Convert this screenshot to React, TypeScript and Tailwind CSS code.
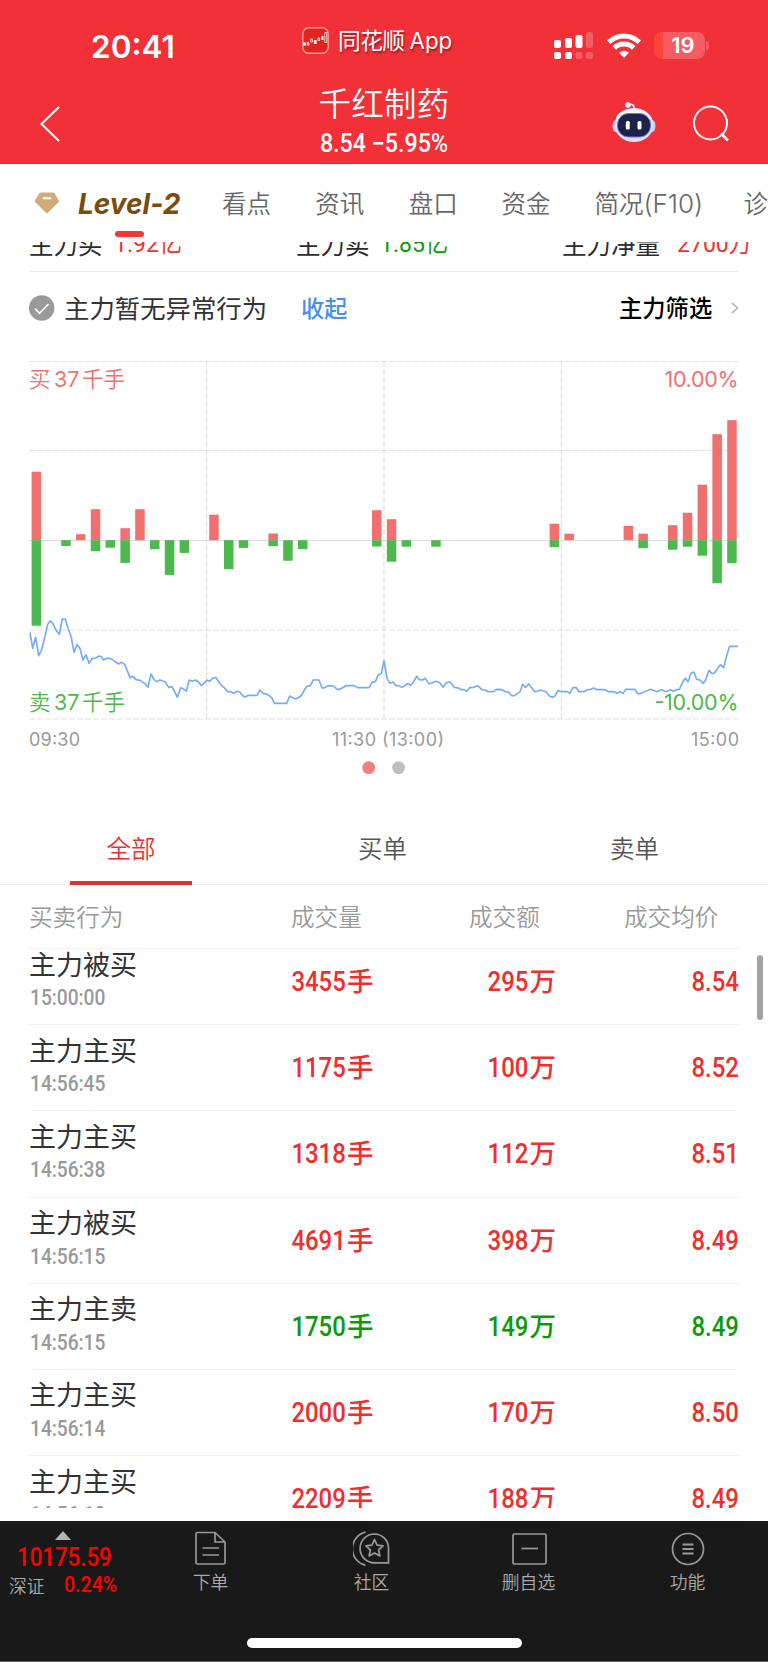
import React from "react";

const RED_BARS: [number, number][] = [
  [0, 68.5], [3, 6], [4, 31], [6, 12], [7, 31], [12, 25.5], [16, 6.7], [23, 30], [24, 21],
  [35, 16.5], [36, 6.5], [40, 14.3], [41, 6.5], [43, 15], [44, 27.5], [45, 55.5], [46, 106], [47, 120],
];
const GREEN_BARS: [number, number][] = [
  [0, 85.5], [2, 5.8], [4, 11], [5, 7.5], [6, 22.7], [8, 9], [9, 34.7], [10, 12.7], [13, 29], [14, 7.7],
  [16, 6], [17, 20.5], [18, 9], [23, 6.3], [24, 21.5], [25, 6.5], [27, 6.5], [35, 7], [41, 8], [43, 9.5],
  [44, 6.5], [45, 15.5], [46, 43], [47, 23],
];

const MORNING =
  "90,98 98,145 107,112 116,167 124,152 133,118 143,73 151,63 158,70 169,92 178,103 187,57 196,57 204,85 214,112 222,157 231,134 240,145 249,180 258,164 267,190 276,176 287,174 298,168 304,170 311,180 320,175 331,175 345,184 355,192 365,187 374,193 383,215 390,233 399,229 408,239 420,241 435,251 444,262 453,222 462,239 470,245 480,240 496,246 506,262 516,260 525,277 532,292 542,263 550,267 559,273 568,240 577,244 587,240 595,246 604,256 612,250 621,240 629,244 638,234 648,233 657,246 665,257 673,263 683,275 692,275 701,280 710,274 719,276 728,287 736,291 745,286 771,286 780,270 789,280 798,282 808,287 816,295 824,310 860,310 869,288 878,293 887,297 897,292 905,285 914,268 922,258 931,257 940,240 957,240 966,264 975,263 984,257 1001,258 1011,268 1020,268 1038,257 1063,257 1072,263 1107,263 1116,247 1126,245 1135,224 1144,221 1152,181";
const AFTERNOON =
  "0,181 9,235 18,250 27,246 36,257 44,257 54,262 63,256 72,251 80,256 89,245 98,229 106,239 115,240 124,235 134,251 143,249 156,244 167,248 177,262 187,248 198,246 211,262 223,264 231,269 240,269 248,274 257,263 268,262 280,257 285,260 293,269 303,270 312,275 328,275 338,268 354,269 364,275 374,276 383,287 392,287 408,275 416,253 424,262 434,252 443,263 452,275 461,274 470,270 487,276 496,288 505,292 513,288 522,271 532,275 550,275 557,280 567,263 577,263 585,275 600,275 610,269 621,268 629,264 638,269 662,269 674,275 690,275 699,280 708,275 717,280 726,268 752,268 761,281 769,281 780,275 801,268 818,275 833,269 845,275 859,269 868,274 877,269 886,268 896,247 904,235 912,245 921,220 930,216 938,238 948,240 957,250 964,242 975,211 984,221 992,218 1009,194 1019,203 1028,167 1037,139 1062,139";

const ROWS = [
  { name: "主力被买", time: "15:00:00", vol: "3455", amt: "295", price: "8.54", buy: true },
  { name: "主力主买", time: "14:56:45", vol: "1175", amt: "100", price: "8.52", buy: true },
  { name: "主力主买", time: "14:56:38", vol: "1318", amt: "112", price: "8.51", buy: true },
  { name: "主力被买", time: "14:56:15", vol: "4691", amt: "398", price: "8.49", buy: true },
  { name: "主力主卖", time: "14:56:15", vol: "1750", amt: "149", price: "8.49", buy: false },
  { name: "主力主买", time: "14:56:14", vol: "2000", amt: "170", price: "8.50", buy: true },
  { name: "主力主买", time: "14:56:10", vol: "2209", amt: "188", price: "8.49", buy: true },
];

function StatusBar() {
  return (
    <div className="flex h-[82px] items-start text-white">
      <div className="mt-[26.5px] ml-[91px] w-[211px] font-['Inter'] text-[31.5px] leading-10 font-semibold">20:41</div>
      <svg className="mt-[27px] h-[27px] w-[27px]" viewBox="0 0 27 27">
        <rect x="0.8" y="0.8" width="25.4" height="25.4" rx="6" fill="#e2231f" stroke="#f79a9a" strokeWidth="1.4" />
        <path d="M1 15.5h3v3H1zM12 13h2.6v4H12zM19.5 9h2v4h-2z" fill="#fff" />
        <path d="M5.200 15.400h1.800v2.800H5.200zM8.800 12h1.800v3H8.800zM16 10.800h1.600v2.600H16zM22.800 5.500h2v10h-2z" fill="none" stroke="#fff" strokeWidth=".8" />
      </svg>
      <div className="mt-[26px] ml-[9px] w-[215.500px] font-['Inter','Noto_Sans_CJK_SC',sans-serif] text-[22.700px] leading-[30px] whitespace-nowrap [text-shadow:1px_2px_2px_rgba(90,0,0,.55)]">
        <span className="tracking-[-0.500px]">同花顺</span>
        <span className="ml-[5px] text-[22.300px]">App</span>
      </div>
      <svg className="mt-[32px] h-[27px] w-[39px]" viewBox="0 0 39 27" fill="#fff">
        <rect x="0" y="8" width="7" height="8" rx="2" />
        <rect x="11" y="6" width="7" height="10" rx="2" />
        <rect x="21.500" y="3" width="7" height="13" rx="2" />
        <rect x="32" y="0" width="7" height="16" rx="2" opacity=".22" />
        <rect x="0" y="20" width="7" height="7" rx="2" />
        <rect x="11" y="20" width="7" height="7" rx="2" />
        <rect x="21.500" y="20" width="7" height="7" rx="2" opacity=".22" />
        <rect x="32" y="20" width="7" height="7" rx="2" opacity=".22" />
      </svg>
      <svg className="mt-[32px] ml-[14px] h-[27px] w-[34px]" viewBox="0 0 34 27" fill="none" stroke="#fff" strokeWidth="5">
        <path d="M1.600 10.200a22 22 0 0 1 30.800 0" />
        <path d="M7.300 16a14 14 0 0 1 19.400 0" />
        <path d="M17 25.800l-5-5.100a7.200 7.200 0 0 1 10 0z" fill="#fff" stroke="none" />
      </svg>
      <div className="mt-[32px] ml-[13px] flex h-[27px] w-[51px] items-center justify-center rounded-[8px] bg-[linear-gradient(90deg,#ff4438_18%,#f55c63_18%)] pl-2 font-['Inter'] text-[22px] leading-[27px] font-semibold">
        19
      </div>
      <div className="mt-[41px] ml-[1.500px] h-[9px] w-[3px] rounded-r-full bg-[#f55c63]" />
    </div>
  );
}

function Robot() {
  return (
    <svg className="h-[42px] w-[44px]" viewBox="0 0 44 42">
      <path d="M16.500 4c3.500-1.500 6 0 6 5" fill="none" stroke="#e9e9f8" strokeWidth="1.800" />
      <circle cx="15.800" cy="4" r="2.800" fill="#f3f3fd" />
      <ellipse cx="3.500" cy="25" rx="3" ry="6" fill="#c9cbef" />
      <ellipse cx="40.500" cy="25" rx="3" ry="6" fill="#c9cbef" />
      <ellipse cx="22" cy="24" rx="19.500" ry="17" fill="#dcdef5" />
      <ellipse cx="21" cy="18" rx="17" ry="10" fill="#f8f8fe" />
      <rect x="5.500" y="12.500" width="33" height="23.500" rx="11" fill="#1c2347" stroke="#7a6fe0" strokeWidth="1" />
      <rect x="13.800" y="20" width="4" height="8.500" rx="1.500" fill="#fff" />
      <rect x="25.500" y="20" width="4" height="8.500" rx="1.500" fill="#fff" />
    </svg>
  );
}

function Header() {
  return (
    <header className="h-[163.500px] bg-[#f23038] text-white">
      <StatusBar />
      <div className="flex">
        <svg className="mt-[22.500px] ml-[38px] h-[38px] w-[24px]" viewBox="0 0 24 38" fill="none" stroke="#fff" strokeWidth="2">
          <path d="M21 2 3.500 19 21 36" />
        </svg>
        <div className="ml-[238px] w-[168px] text-center">
          <div className="h-[44px] text-[32.500px] leading-[40px] font-[350] tracking-[0.300px]">千红制药</div>
          <div className="origin-center scale-x-[.93] font-['Roboto'] text-[25px] leading-[36px] font-medium whitespace-nowrap">
            8.54 −5.95%
          </div>
        </div>
        <div className="mt-[19px] ml-[144px]">
          <Robot />
        </div>
        <svg className="mt-[20.500px] ml-[35px] h-[40px] w-[40px]" viewBox="0 0 40 40" fill="none" stroke="#fff" strokeWidth="2">
          <circle cx="19.500" cy="20" r="16.500" />
          <path d="m30 30.500 7 7" strokeWidth="2.500" />
        </svg>
      </div>
    </header>
  );
}

function SectionTabs() {
  return (
    <nav className="flex h-[78.500px] items-start overflow-hidden bg-white text-[24.500px] leading-[36px] font-[350] whitespace-nowrap text-[#666]">
      <svg className="mt-[28px] ml-[34px] h-[22px] w-[26px]" viewBox="0 0 26 22">
        <path d="M7 0.500h12q1 0 1.600.8l4.400 7.200q.5 1-.3 1.800L14 20.700q-1 .8-2 0L1.300 10.300q-.8-.8-.3-1.800L5.400 1.300Q6 .5 7 .500z" fill="#cfac78" />
        <path d="M9.500 6.200h7" stroke="#fff" strokeWidth="1.800" strokeLinecap="round" />
      </svg>
      <div className="mt-[22px] ml-[18px] w-[145px] text-[#7a4b0c]">
        <div className="w-[102px] origin-left scale-x-[.965] font-['Inter'] text-[29px] font-bold italic">Level-2</div>
        <div className="mt-[9.500px] ml-[37px] h-[5.500px] w-[29px] rounded-full bg-[#fb3434]" />
      </div>
      <div className="mt-[21px] w-[94px]">看点</div>
      <div className="mt-[21px] w-[94px]">资讯</div>
      <div className="mt-[21px] w-[93.500px]">盘口</div>
      <div className="mt-[21px] w-[93.500px]">资金</div>
      <div className="mt-[21px] w-[150px]">
        简况<span className="font-['Inter'] text-[26px]">(F10)</span>
      </div>
      <div className="mt-[21px]">诊</div>
    </nav>
  );
}

function Total({ children }: { children: string }) {
  return (
    <span className="inline-block origin-left scale-x-[.94] -translate-y-[2px] font-['Roboto','Noto_Sans_CJK_SC',sans-serif] text-[24.500px]">
      {children}
    </span>
  );
}

function Totals() {
  return (
    <div className="h-[29px] overflow-hidden">
      <div className="-mt-[14px] ml-[29px] flex text-[24.500px] leading-[32px] font-normal whitespace-nowrap text-[#2b2b2b]">
        <div className="w-[85px]">主力买</div>
        <div className="w-[182px] text-[#f0322f]"><Total>1.92亿</Total></div>
        <div className="w-[84px]">主力卖</div>
        <div className="w-[182px] text-[#0a9b0a]"><Total>1.85亿</Total></div>
        <div className="w-[115px]">主力净量</div>
        <div className="text-[#f0322f]"><Total>2700万</Total></div>
      </div>
    </div>
  );
}

function Notice() {
  return (
    <div className="mx-[29px] flex h-[69px] items-center border-t border-[#ebebeb] pt-[3px] text-[#333]">
      <svg className="h-[26px] w-[26px]" viewBox="0 0 26 26">
        <circle cx="12.700" cy="13" r="12.700" fill="#999" />
        <path d="m6 13.500 4.500 4.800L19.500 9" fill="none" stroke="#fff" strokeWidth="1.600" />
      </svg>
      <div className="-mt-[1px] ml-[9px] w-[237px] text-[25.400px] whitespace-nowrap">主力暂无异常行为</div>
      <div className="-mt-[1px] w-[318px] text-[23.200px] font-medium text-[#468fee]">收起</div>
      <div className="-mt-[1px] text-[23.300px] font-medium whitespace-nowrap text-black">主力筛选</div>
      <svg className="ml-auto h-[12px] w-[8px]" viewBox="0 0 8 12" fill="none" stroke="#aaa" strokeWidth="1.300">
        <path d="m1 1 5.500 5L1 11" />
      </svg>
    </div>
  );
}

function Chart() {
  return (
    <svg className="block h-[450px] w-[768px]" viewBox="0 340 768 450">
      <g stroke="#e2e2e2" strokeWidth="1.200" strokeDasharray="6 2">
        {[361.5, 450.5, 630, 719].map((y) => <path key={y} d={`M29 ${y}H738`} />)}
        {[206.5, 384, 561.5].map((x) => <path key={x} d={`M${x} 361V719`} />)}
      </g>
      <path d="M29 540.500H739" stroke="#dcdcdc" strokeWidth="1.200" />
      {RED_BARS.map(([i, h]) => (
        <rect key={i} x={31.6 + i * 14.8} y={540.2 - h} width="9.500" height={h} fill="#f07070" />
      ))}
      {GREEN_BARS.map(([i, h]) => (
        <rect key={i} x={31.6 + i * 14.8} y="540.200" width="9.500" height={h} fill="#4db84d" />
      ))}
      <g fill="none" stroke="#74adf5" strokeWidth="5" strokeLinejoin="round">
        <polyline transform="translate(0 600) scale(.33333)" points={MORNING} />
        <polyline transform="translate(384 600) scale(.33333)" points={AFTERNOON} />
      </g>
      <g className="font-['Inter','Noto_Sans_CJK_SC',sans-serif] text-[21.500px] font-normal">
        <text y="386.500" fill="#f07070">
          <tspan x="29" className="font-[350]">买</tspan>
          <tspan x="54">37</tspan>
          <tspan x="82" className="font-[350]">千手</tspan>
        </text>
        <text x="738.500" y="386.500" fill="#f07070" textAnchor="end" textLength="74">10.00%</text>
        <text y="709.500" fill="#4db84d">
          <tspan x="29" className="font-[350]">卖</tspan>
          <tspan x="54">37</tspan>
          <tspan x="82" className="font-[350]">千手</tspan>
        </text>
        <text x="738.500" y="709.500" fill="#4db84d" textAnchor="end" textLength="84">-10.00%</text>
      </g>
      <g className="font-['Inter'] text-[18px]" fill="#999">
        <text x="29" y="746" textLength="51">09:30</text>
        <text x="332" y="746" textLength="112">11:30 (13:00)</text>
        <text x="739" y="746" textAnchor="end" textLength="48">15:00</text>
      </g>
      <circle cx="368.700" cy="767.600" r="6.400" fill="#f08080" />
      <circle cx="398.600" cy="767.600" r="6.400" fill="#bfbfbf" />
    </svg>
  );
}

function OrderTabs() {
  return (
    <div className="grid h-[94.500px] grid-cols-[262px_241px_1fr] border-b border-[#eee] text-center text-[24.500px] leading-[36px] font-[350] text-[#555]">
      <div className="flex flex-col items-center justify-between pt-[40px] text-[#ef3030]">
        全部
        <div className="-mb-px h-[4px] w-[122px] bg-[#e93030]" />
      </div>
      <div className="pt-[40px]">买单</div>
      <div className="pt-[40px] pr-[2px]">卖单</div>
    </div>
  );
}

function TradeTable() {
  return (
    <section>
      <div className="mx-[29px] flex h-[64.500px] items-center border-b border-[#f2f2f2] text-[23.600px] font-[350] whitespace-nowrap text-[#999]">
        <div className="w-[262px]">买卖行为</div>
        <div className="w-[178px]">成交量</div>
        <div className="w-[155px]">成交额</div>
        <div>成交均价</div>
      </div>
      <div className="relative h-[559px] overflow-hidden">
        <div className="-mt-[10px] px-[29px]">
          {ROWS.map((r, i) => (
            <div
              key={i}
              className={`flex h-[86.200px] border-b border-[#f2f2f2] font-medium whitespace-nowrap ${r.buy ? "text-[#ef2e2e]" : "text-[#0b9a0b]"}`}
            >
              <div className="w-[250px]">
                <div className="mt-[7.500px] h-[34px] text-[27px] leading-[34px] font-normal text-[#333]">{r.name}</div>
                <div className="mt-[4.500px] ml-[.5px] origin-left scale-x-[.87] font-['Roboto'] text-[22px] leading-[26px] font-medium text-[#999]">{r.time}</div>
              </div>
              <div className="w-[94.500px] pt-[25px] text-right">
                <Amount value={r.vol} unit="手" />
              </div>
              <div className="w-[182.500px] pt-[25px] text-right">
                <Amount value={r.amt} unit="万" />
              </div>
              <div className="flex-1 pt-[25px] text-right">
                <Amount value={r.price} />
              </div>
            </div>
          ))}
        </div>
        <div className="absolute top-[5.500px] right-[5.500px] h-[65px] w-[5.500px] rounded-full bg-[#a3a3a3]" />
      </div>
    </section>
  );
}

function Amount({ value, unit = "" }: { value: string; unit?: string }) {
  return (
    <div className="flex items-start justify-end leading-[36px]">
      <span className="inline-block origin-right scale-x-[.88] font-['Roboto'] text-[27.200px]">{value}</span>
      {unit && <span className="-mt-[2px] ml-px text-[26.500px]">{unit}</span>}
    </div>
  );
}

function BottomBar() {
  return (
    <footer className="mt-[13px] flex h-[141px] flex-col border-b border-[#666] bg-[#191919] text-[17.800px] leading-[26px] font-[350] text-[#aaa]">
      <div className="flex h-[116px]">
        <div className="w-[126px] text-[#f00]">
          <svg className="mt-[9.500px] ml-[55px] h-[9px] w-[16px]" viewBox="0 0 16 9">
            <path d="M8 0 16 9H0z" fill="#b3b3b3" />
          </svg>
          <div className="mt-[3px] ml-[17px] w-[120px] origin-left scale-x-[.89] font-['Roboto'] text-[25px] leading-[30px] font-medium">10175.59</div>
          <div className="-mt-px flex whitespace-nowrap">
            <span className="ml-[9px] w-[55px] text-[#aaa]">深证</span>
            <span className="origin-left scale-x-[.91] font-['Roboto'] text-[21.500px] font-medium">0.24%</span>
          </div>
        </div>
        <div className="flex w-[169px] flex-col items-center pt-[9.500px]">
          <svg className="h-[35px] w-[34px]" viewBox="0 0 34 35" fill="none" stroke="#999" strokeWidth="1.700">
            <path d="M3.500 1.500H21L31 11v20.500q0 1.500-1.500 1.500H3.500Q2 33 2 31.500V3q0-1.500 1.500-1.500zM21 1.500V11h10M8.500 17h16.500M8.500 24h16.500" />
          </svg>
          <div className="mt-[2px]">下单</div>
        </div>
        <div className="flex w-[153px] flex-col items-center pt-[9.500px]">
          <svg className="h-[35px] w-[38px]" viewBox="0 0 38 35" fill="none" stroke="#999" strokeWidth="1.700">
            <path d="M12.500 1.200A17 17 0 0 0 12.500 34.300" />
            <path d="M21.500 3a14.200 14.200 0 1 0 0 28.800h14V17A14.200 14.200 0 0 0 21.500 3z" />
            <path d="m21.500 8.500 2.600 5.700 6 .7-4.500 4.100 1.300 6-5.400-3.100-5.400 3.100 1.300-6-4.500-4.100 6-.7z" strokeLinejoin="round" />
          </svg>
          <div className="mt-[2px]">社区</div>
        </div>
        <div className="flex w-[161px] flex-col items-center pt-[9.500px]">
          <svg className="h-[35px] w-[36px]" viewBox="0 0 36 35" fill="none" stroke="#999" strokeWidth="1.700">
            <rect x="2" y="3" width="33" height="30" rx="1.500" />
            <path d="M10.500 17.500h16.500" />
          </svg>
          <div className="mt-[2px]">删自选</div>
        </div>
        <div className="flex w-[157px] flex-col items-center pt-[9.500px]">
          <svg className="h-[35px] w-[34px]" viewBox="0 0 34 35" fill="none" stroke="#999" strokeWidth="1.700">
            <circle cx="17" cy="18" r="15.500" />
            <path d="M11.500 13.500h11M11.500 18h11M11.500 22.500h11" strokeWidth="1.900" />
          </svg>
          <div className="mt-[2px]">功能</div>
        </div>
      </div>
      <div className="mx-auto mt-[1px] h-[9.500px] w-[275px] shrink-0 rounded-full bg-white" />
    </footer>
  );
}

export default function App() {
  return (
    <div className="h-[1662px] w-[768px] overflow-hidden bg-white font-['Noto_Sans_CJK_SC',sans-serif]">
      <Header />
      <SectionTabs />
      <Totals />
      <Notice />
      <Chart />
      <OrderTabs />
      <TradeTable />
      <BottomBar />
    </div>
  );
}
